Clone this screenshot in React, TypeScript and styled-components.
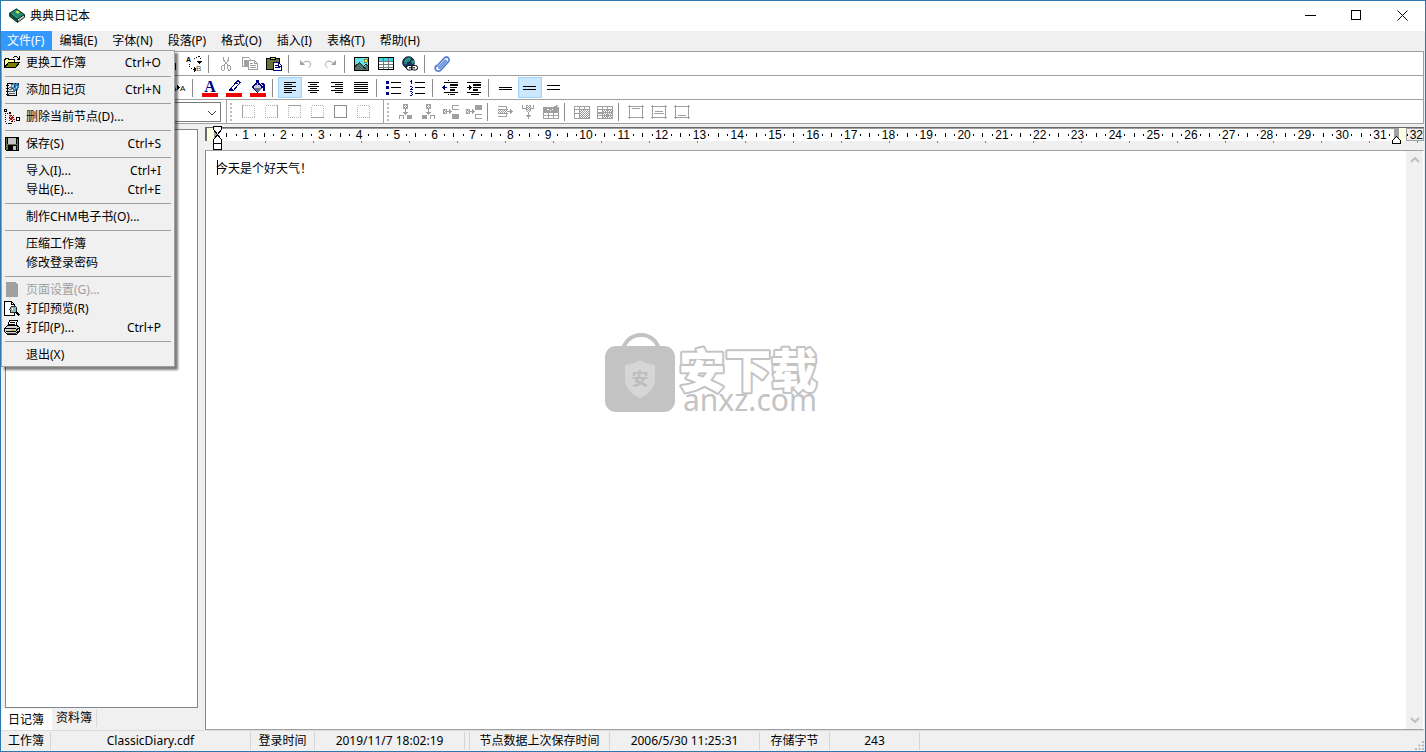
import React from "react";
import styled, { createGlobalStyle, css } from "styled-components";

const UI_FONT = `"Noto Sans", "Noto Sans CJK SC", sans-serif`;
const FACE = "#f0f0f0";
const LINE = "#a0a0a0";
const NAVY = "#000080";

const GlobalStyle = createGlobalStyle`
  *, *::before, *::after { box-sizing: border-box; }
  body { margin: 0; background: ${FACE}; }
  button, select, textarea { font: inherit; color: inherit; }
  svg { display: block; flex: none; }
`;

/* ---------- window frame ---------- */

const Window = styled.div`
  position: relative;
  display: flex;
  flex-direction: column;
  min-height: 100vh;
  border: 1px solid #2d78ae;
  background: ${FACE};
  color: #000;
  font: 12px/16px ${UI_FONT};
`;

const TitleBar = styled.header`
  display: flex;
  align-items: center;
  height: 30px;
  padding-left: 8px;
  background: #fff;
`;

const Title = styled.h1`
  flex: 1;
  margin: 0 0 0 5px;
  font-size: 12px;
  font-weight: 400;
  line-height: 16px;
`;

const CaptionButton = styled.button`
  display: flex;
  align-items: center;
  justify-content: center;
  width: 46px;
  height: 30px;
  padding: 0 0 2px;
  border: 0;
  background: transparent;
`;

const MenuBar = styled.nav`
  position: relative;
  display: flex;
  height: 20px;
`;

const MenuTitle = styled.button<{ $open?: boolean }>`
  height: 20px;
  padding: 0 8px 0 7px;
  border: 0;
  background: ${(p) => (p.$open ? "#3399ff" : "transparent")};
  color: ${(p) => (p.$open ? "#fff" : "#000")};
  white-space: nowrap;
  &:first-child { padding-left: 6px; }
`;

/* ---------- drop-down menu ---------- */

const Menu = styled.div`
  position: absolute;
  z-index: 2;
  top: 19px;
  left: 0;
  width: 174px;
  padding: 2px;
  border: 1px solid ${LINE};
  background: ${FACE};
  box-shadow: 3px 3px 2px rgba(0, 0, 0, 0.5);
`;

const MenuItem = styled.button`
  display: flex;
  align-items: center;
  width: 100%;
  height: 19px;
  padding: 0 11px 0 0;
  border: 0;
  background: transparent;
  text-align: left;
  white-space: nowrap;
  &:disabled { color: #a0a0a0; }
`;

const MenuIcon = styled.span`
  display: flex;
  flex: none;
  width: 22px;
`;

const MenuLabel = styled.span`
  flex: 1;
`;

const MenuRule = styled.hr`
  height: 1px;
  margin: 4px 1px 3px;
  border: 0;
  background: ${LINE};
`;

/* ---------- toolbars ---------- */

const CoolBar = styled.div`
  margin: 0 1px;
  border: 1px solid ${LINE};
  background: #fff;
`;

const ToolRow = styled.div`
  display: flex;
  align-items: center;
  height: 24px;
  border-bottom: 1px solid ${LINE};
  &:last-child { height: 23px; border-bottom: 0; }
`;

const ToolGroup = styled.div<{ $indent?: number }>`
  display: flex;
  align-items: center;
  padding-left: ${(p) => p.$indent ?? 0}px;
`;

const ToolButton = styled.button<{ $on?: boolean; $narrow?: boolean }>`
  display: flex;
  align-items: center;
  justify-content: center;
  width: ${(p) => (p.$narrow ? 23 : 24)}px;
  height: 21px;
  padding: 0;
  border: 1px solid transparent;
  background: transparent;
  ${(p) =>
    p.$on &&
    css`
      border-color: #99d1ff;
      background: #cce8ff;
    `}
`;

const ToolRule = styled.span`
  width: 1px;
  height: 18px;
  margin: 0 5px 0 2px;
  background: #8c8c8c;
`;

const BandEdge = styled.span`
  width: 1px;
  height: 23px;
  background: ${LINE};
`;

const Grip = styled.span`
  width: 2px;
  height: 18px;
  margin: 0 4px 0 3px;
  background: repeating-linear-gradient(#bcbcbc 0 2px, #fff 2px 4px);
`;

const SelectBox = styled.div`
  position: relative;
  display: flex;
  margin: 0 5px 0 10px;
  svg {
    position: absolute;
    top: 8px;
    right: 4px;
    pointer-events: none;
  }
`;

const StyleSelect = styled.select`
  appearance: none;
  width: 208px;
  height: 20px;
  padding: 0 20px 0 4px;
  border: 1px solid #7a7a7a;
  border-radius: 0;
  background: #fff;
`;

/* ---------- body ---------- */

const Body = styled.main`
  display: flex;
  flex: 1;
`;

const SidePane = styled.aside`
  display: flex;
  flex: none;
  flex-direction: column;
  width: 204px;
  padding-top: 5px;
`;

const Tree = styled.div`
  flex: 1;
  margin: 0 7px 0 4px;
  border: 1px solid #828790;
  background: #fff;
`;

const Tabs = styled.div`
  display: flex;
  align-items: flex-start;
  height: 22px;
  padding: 1px 0 0 1px;
`;

const Tab = styled.button<{ $active?: boolean }>`
  height: ${(p) => (p.$active ? 21 : 18)}px;
  padding: ${(p) => (p.$active ? "0 8px 0 6px" : "0 4px")};
  border: 0 solid #dadada;
  border-right-width: ${(p) => (p.$active ? 0 : 1)}px;
  background: ${(p) => (p.$active ? "#fff" : FACE)};
`;

const DocPane = styled.section`
  display: flex;
  flex: 1;
  flex-direction: column;
  min-width: 0;
  padding: 3px 1px 0 0;
`;

const Ruler = styled.div`
  position: relative;
  display: flex;
  height: 14px;
  border-top: 1px solid #696969;
  border-left: 2px solid #696969;
  background: #fff;
  font: 12px/12px "Liberation Sans", sans-serif;
`;

const RulerBlock = styled.span<{ $color: string; $width: number }>`
  flex: none;
  width: ${(p) => p.$width}px;
  background: ${(p) => p.$color};
`;

const RulerScale = styled.div`
  display: flex;
  flex: 1;
  align-items: center;
  min-width: 0;
  padding-left: 5px;
  border-top: 1px solid #a0a0a0;
`;

const RulerCell = styled.span`
  display: flex;
  flex: 1 1 0;
  justify-content: center;
  min-width: 0;
  white-space: nowrap;
`;

const RulerMark = styled.i<{ $long?: boolean }>`
  width: 1px;
  height: ${(p) => (p.$long ? 4 : 2)}px;
  background: #000;
`;

const RulerEnd = styled.span`
  display: flex;
  align-items: center;
  justify-content: flex-end;
  gap: 2px;
  width: 18px;
  border: 1px solid ${LINE};
  background: ${FACE};
`;

const TabStops = styled.div`
  height: 9px;
  margin-left: 1px;
  background: repeating-linear-gradient(90deg, #808080 0 1px, transparent 1px 48px) 11px 0 / 48px 2px repeat-x;
`;

const IndentMarkers = styled.svg`
  position: absolute;
  top: -3px;
  left: 5px;
`;

const RightMarker = styled.svg`
  position: absolute;
  top: 8px;
  right: 22px;
`;

const Editor = styled.div`
  position: relative;
  display: flex;
  flex: 1;
  border: 1px solid ${LINE};
  border-color: ${LINE} #fff ${LINE} #828790;
  background: #fff;
`;

const Page = styled.textarea`
  flex: 1;
  min-width: 0;
  padding: 9px 10px;
  border: 0;
  outline: 0;
  resize: none;
  background: #fff;
  font: 12px/16px "Noto Sans CJK SC", sans-serif;
`;

const Caret = styled.span`
  position: absolute;
  top: 9px;
  left: 11px;
  width: 1px;
  height: 15px;
  background: #000;
`;

const ScrollBar = styled.div`
  display: flex;
  flex: none;
  flex-direction: column;
  justify-content: space-between;
  width: 17px;
  background: ${FACE};
`;

const ScrollButton = styled.button`
  display: flex;
  align-items: center;
  justify-content: center;
  width: 17px;
  height: 18px;
  padding: 0;
  border: 0;
  background: transparent;
`;

const Watermark = styled.svg`
  position: absolute;
  z-index: 1;
  top: 50%;
  left: 50%;
  transform: translate(-50%, -50%);
  pointer-events: none;
`;

/* ---------- status bar ---------- */

const StatusBar = styled.footer`
  display: flex;
  align-items: center;
  height: 21px;
  padding-left: 1px;
  border-top: 1px solid #dcdcdc;
`;

const StatusCell = styled.span<{ $width: number }>`
  width: ${(p) => p.$width}px;
  height: 18px;
  border-right: 1px solid #d4d4d4;
  line-height: 18px;
  text-align: center;
  white-space: nowrap;
`;

const SizeGrip = styled.svg`
  align-self: flex-end;
  margin: 0 1px 1px auto;
`;

/* ---------- icons ---------- */

type IconProps = { children: React.ReactNode; w?: number; h?: number; smooth?: boolean };

const Icon = ({ children, w = 16, h = 16, smooth }: IconProps) => (
  <svg
    width={w}
    height={h}
    viewBox={`0 0 ${w} ${h}`}
    fill="none"
    shapeRendering={smooth ? "auto" : "crispEdges"}
    aria-hidden="true"
  >
    {children}
  </svg>
);

const BookIcon = () => (
  <Icon smooth>
    <path d="M.7 5.200 7.400.8l8.100 5.800-7 4.600z" fill="#1c8a6c" stroke="#0c2a24" />
    <path d="M.7 5.200v3.200l7.800 6v-3.300z" fill="#0d5a4c" stroke="#0c2a24" />
    <path d="M8.500 11.200l7-4.600v2.800l-7 5z" fill="#e9efe2" stroke="#0c2a24" />
    <path d="M9 12.900l6-4.200" stroke="#777" strokeWidth=".6" />
    <path d="M6.300 3.900l2-1.300 2.600 1.800-2 1.400z" fill="#e3e23c" />
    <path d="M2.600 5.800l5.800 4.300" stroke="#53c2a0" strokeWidth=".8" />
  </Icon>
);

const OpenIcon = () => (
  <Icon>
    <path d="M10 1h3v1h-3zM9 2h1v1h-1zM13 2h1v1h-1zM14 3h2v1h-2zM15 1h1v3h-1zM13 4h3v1h-3z" fill="#000" />
    <path d="M.5 12.500v-8h1v-1h3v1h6v3" fill="#ffff99" stroke="#000" />
    <path d="M.5 12.500l4-5h11l-4 5z" fill="#808000" stroke="#000" />
  </Icon>
);

const AddPageIcon = () => (
  <Icon>
    <path d="M3.500 1.500h9v12h-9z" fill="#e4e8ea" stroke="#000" />
    <path d="M2 3h3v1h-3zM2 6h3v1h-3zM2 9h3v1h-3zM2 12h3v1h-3z" fill="#000" />
    <path d="M5 5h2v1h-2zM5 7h3v1h-3zM5 9h6v1h-6zM5 11h6v1h-6z" fill="#5a6468" />
    <path d="M7 2h2v-1h2v1h1v-1h2v2h1v3h-1v2h-2v1h-3v-2h-2z" fill="#2c7dbb" />
    <path d="M8 3h2v2h-2zM12 4h1v2h-1zM10 6h1v1h-1z" fill="#a9daf5" />
    <path d="M14 1h1v2h-1zM10 3h1v2h-1zM13 7h1v1h-1zM8 6h1v1h-1z" fill="#10243c" />
  </Icon>
);

const DeleteNodeIcon = () => (
  <Icon>
    <path d="M0 0h3v3h-3zM12 8h4v4h-4z" fill="#000" />
    <path d="M1 1h1v1h-1zM13 9h2v2h-2z" fill="#fff" />
    <path
      d="M1 4h1v1h-1zM1 6h1v1h-1zM1 8h1v1h-1zM1 10h1v1h-1zM1 12h1v1h-1zM2 14h1v1h-1zM4 14h1v1h-1zM3 4h1v1h-1zM5 3h2v2h-2zM5 14h3v1h-3z"
      fill="#000"
    />
    <path
      d="M5 6h2v1h-2zM9 6h1v1h-1zM6 7h1v1h-1zM8 7h1v1h-1zM5 9h4v1h-4zM7 8h2v1h-2zM6 10h1v1h-1zM9 10h2v1h-2zM5 11h1v1h-1zM8 11h1v1h-1zM10 12h1v1h-1z"
      fill="#b01818"
    />
    <path d="M7 6h1v1h-1zM9 8h1v1h-1zM7 10h1v1h-1zM5 8h1v1h-1zM7 12h2v1h-2z" fill="#1c0808" />
  </Icon>
);

const SaveIcon = () => (
  <Icon>
    <path d="M1.500 1.500h13v13h-12l-1-1z" fill="#6c6c44" stroke="#000" />
    <path d="M4 2h8v6h-8z" fill="#c4c4c4" />
    <path d="M4 9h9v5h-9zM3 2h1v6h-1zM12 2h1v6h-1zM13 2h1v1h-1z" fill="#000" />
    <path d="M9 10h3v4h-3z" fill="#c0c0c0" />
  </Icon>
);

const PageSetupIcon = () => (
  <Icon>
    <path d="M2 0h9l3 3v12h-12z" fill="#a0a0a0" />
  </Icon>
);

const PreviewIcon = () => (
  <Icon>
    <path d="M.5.5h7l3 3v11h-10z" fill="#fff" stroke="#000" />
    <path d="M7.500.5v3h3" stroke="#000" />
    <circle cx="9.500" cy="8.500" r="3.500" fill="#8fb8b4" stroke="#1c2c2c" />
    <path d="M12 11l3.500 3.500" stroke="#000" strokeWidth="2" />
    <path d="M8 7h1v2h-1z" fill="#fff" />
  </Icon>
);

const PrintIcon = () => (
  <Icon>
    <path d="M5.500.5h8l-2 6h-8z" fill="#fff" stroke="#000" />
    <path d="M6 2h5v1h-5zM5 4h6v1h-6z" fill="#000" />
    <path d="M.5 8.500l3-3h9.500l2.500 2v4l-3 3h-9l-3-3z" fill="#d4d4cc" stroke="#000" />
    <path d="M1 8h11v1h-11zM2 11h10v1h-10zM12 9h1v-1h2v1h-1v1h-1v1h-1zM12 12h1v-1h2v1h-1v1h-2z" fill="#000" />
    <path d="M3 13h9v1h-9z" fill="#404038" />
    <path d="M7 10h4v1h-4z" fill="#b8b000" />
  </Icon>
);

const ReplaceIcon = () => (
  <Icon>
    <text x="0" y="6" fontFamily="Liberation Sans" fontWeight="700" fontSize="7" fill="#000">A</text>
    <text x="10" y="15" fontFamily="Liberation Sans" fontSize="8" fill="#555">B</text>
    <path
      d="M3 8h1v1h-1zM3 10h1v1h-1zM5 12h1v1h-1zM7 13h1v1h-1zM8 11h1v5h-1zM9 12h1v3h-1zM8 2h1v1h-1zM10 1h1v1h-1zM12 0h2v1h-2zM14 2h1v1h-1zM11 5h5v1h-5zM12 6h3v1h-3zM13 7h1v1h-1z"
      fill="#000"
    />
  </Icon>
);

const FindIcon = () => (
  <Icon>
    <path d="M2 3h4v4h3v-4h4v4h1v7h-5v-4h-3v4h-5v-7h1z" fill="#000" />
  </Icon>
);

const CutIcon = () => (
  <Icon>
    <path d="M5.500 1v3l5 6M10.500 1v3l-5 6" stroke="#a0a0a0" />
    <path d="M4 9h2v1h-2zM3 10h1v4h-1zM6 10h1v3h-1zM4 14h2v-1h1v1h-1v1h-2zM10 9h2v1h-2zM9 10h1v3h-1zM12 10h1v4h-1zM10 13h1v1h1v1h-2z" fill="#a0a0a0" />
  </Icon>
);

const CopyIcon = () => (
  <Icon>
    <path d="M.5 1.500h6l2 2v7h-8zM2 4h3v1h-3zM2 6h4v1h-4zM2 8h4v1h-4z" stroke="#a0a0a0" strokeWidth="1" />
    <path d="M6.500 4.500h6l3 3v6h-9z" fill="#fff" stroke="#a0a0a0" />
    <path d="M12.500 4.500v3h3M8 7.500h3M8 9.500h6M8 11.500h6" stroke="#a0a0a0" />
  </Icon>
);

const PasteIcon = () => (
  <Icon>
    <path d="M.5 2.500h13v11h-13z" fill="#6e6e3c" stroke="#000" />
    <path d="M4 1h6v3h-6z" fill="#000" />
    <path d="M5 2h4v1h-4z" fill="#d8d860" />
    <path d="M7.500 6.500h5l3 3v5h-8z" fill="#fff" stroke={NAVY} />
    <path d="M9 9.500h3M9 11.500h5M12.500 7v3h3" stroke={NAVY} />
  </Icon>
);

const UndoIcon = () => (
  <Icon smooth>
    <path d="M4 8.500c1.500-3 6-4.500 8-2 1.500 2 .5 4-1.500 5" stroke="#a0a0a0" />
    <path d="M2 4v5h5z" fill="#a0a0a0" />
  </Icon>
);

const RedoIcon = () => (
  <Icon smooth>
    <path d="M12 8.500c-1.500-3-6-4.500-8-2-1.500 2-.5 4 1.500 5" stroke="#a0a0a0" />
    <path d="M14 4v5h-5z" fill="#a0a0a0" />
  </Icon>
);

const ImageIcon = () => (
  <Icon>
    <path d="M.5 1.500h14v13h-14z" fill="#63e3e8" stroke="#000" />
    <path d="M1 14v-3l4-4h1l4 4 2-2 2 2v3z" fill="#56706c" />
    <path d="M1 10.500l4.500-4 6 6.500M9 11l3-3 2.500 2" stroke="#102828" />
    <path d="M10 3h3v3h-3z" fill="#f6f03c" stroke="#333" strokeWidth=".5" />
  </Icon>
);

const TableIcon = () => (
  <Icon>
    <path d="M.5 1.500h15v12h-15z" fill="#fff" stroke="#000" />
    <path d="M1 2h14v3h-14z" fill="#35d6e0" />
    <path d="M1 5h14v1h-14zM1 8h14v1h-14zM1 11h14v1h-14zM5 2h1v11h-1zM10 2h1v11h-1z" fill="#6c7c7c" />
  </Icon>
);

const GlobeIcon = () => (
  <Icon smooth>
    <circle cx="6.500" cy="6.500" r="5.800" fill="#14306e" stroke="#0a1c38" />
    <path d="M3 3.500c2-2.200 5-2.500 6-1.500l-1 3-3 1-1 3-2-2z" fill="#2a9b6c" />
    <path d="M9 5l3-1 .3 3-2.300 1z" fill="#2a9b6c" />
    <rect x="4.500" y="9.500" width="6" height="4.500" rx="2" fill="#fff" stroke="#000" />
    <rect x="9.500" y="9.500" width="6" height="4.500" rx="2" fill="#fff" stroke="#000" />
    <path d="M7 11.800h6" stroke="#000" />
  </Icon>
);

const ClipIcon = () => (
  <Icon smooth>
    <path
      d="M2.500 10.500l7.500-8.200c1.200-1.300 3-1.500 4.200-.5s1.200 2.800 0 4.100l-7.200 7.900c-1.300 1.500-3.500 1.700-4.800.6s-1.400-3.300-.1-4.800"
      stroke="#5b84d4"
      strokeWidth="1.800"
      strokeLinecap="round"
    />
    <path d="M11.500 5l-6 6.500" stroke="#5b84d4" strokeWidth="3" strokeLinecap="round" />
    <path d="M11.500 5l-6 6.500" stroke="#a9c4f4" strokeLinecap="round" />
  </Icon>
);

const CaseIcon = () => (
  <Icon>
    <text x="1" y="11" fontFamily="Liberation Sans" fontWeight="700" fontSize="8" fill="#000">A</text>
    <path d="M7 5h1v5h-1zM8 6h1v3h-1zM9 7h1v1h-1z" fill="#000" />
    <text x="10" y="11" fontFamily="Liberation Sans" fontSize="8" fill="#000">A</text>
  </Icon>
);

const FontColorIcon = () => (
  <svg width="16" height="20" viewBox="0 0 16 20" aria-hidden="true">
    <text x="8" y="14" textAnchor="middle" fontFamily="Liberation Serif" fontWeight="700" fontSize="16" fill={NAVY}>
      A
    </text>
    <path d="M0 15h16v4h-16z" fill="#f00000" />
  </svg>
);

const HighlightIcon = () => (
  <svg width="16" height="20" viewBox="0 0 16 20" fill="none" shapeRendering="crispEdges" aria-hidden="true">
    <path d="M5 10l7-7.500 2 2-6.500 8z" fill="#fff" stroke={NAVY} />
    <path d="M10.500 5l2.500 2" stroke={NAVY} />
    <path d="M3 13v-1l2-2.500 2.500 2.500-2 1z" fill={NAVY} />
    <path d="M0 15h16v4h-16z" fill="#f00000" />
  </svg>
);

const FillIcon = () => (
  <svg width="16" height="20" viewBox="0 0 16 20" fill="none" shapeRendering="crispEdges" aria-hidden="true">
    <path d="M2.500 9l5-5 5 5-5 5z" fill="#c8c8e0" stroke={NAVY} />
    <path d="M3 10h9l-4 4z" fill="#6c6c8c" />
    <path d="M6.500 7v-5h2v5" stroke={NAVY} />
    <path d="M11 5h3l1 2v6h-2v-5z" fill={NAVY} />
    <path d="M0 15h16v4h-16z" fill="#f00000" />
  </svg>
);

const Lines = ({ rows }: { rows: [number, number][] }) => (
  <path d={rows.map(([x, w], i) => `M${x} ${2 + i * 2}h${w}v1h-${w}z`).join("")} fill="#000" />
);

const AlignLeftIcon = () => (
  <Icon><Lines rows={[[2, 12], [2, 8], [2, 12], [2, 8], [2, 12], [2, 8]]} /></Icon>
);
const AlignCenterIcon = () => (
  <Icon><Lines rows={[[2, 11], [4, 7], [2, 11], [4, 7], [2, 11], [4, 7]]} /></Icon>
);
const AlignRightIcon = () => (
  <Icon><Lines rows={[[1, 12], [5, 8], [1, 12], [5, 8], [1, 12], [5, 8]]} /></Icon>
);
const AlignJustifyIcon = () => (
  <Icon><Lines rows={[[0, 14], [0, 14], [0, 14], [0, 14], [0, 14], [0, 14]]} /></Icon>
);

const BulletIcon = () => (
  <Icon>
    <path d="M0 1h3v3h-3zM0 6h3v3h-3zM0 12h3v3h-3z" fill={NAVY} />
    <path d="M5 2h10v1h-10zM5 7h10v1h-10zM5 13h10v1h-10z" fill="#000" />
  </Icon>
);

const NumberIcon = () => (
  <Icon>
    <path d="M1 0h1v4h-1zM0 1h1v1h-1z" fill={NAVY} />
    <path d="M0 6h2v1h-2zM2 7h1v1h-1zM1 8h1v1h-1zM0 9h3v1h-3z" fill={NAVY} />
    <path d="M0 11h2v1h-2zM2 12h1v1h-1zM1 13h1v1h-1zM2 14h1v1h-1zM0 15h2v1h-2z" fill={NAVY} />
    <path d="M5 2h10v1h-10zM5 7h10v1h-10zM5 13h10v1h-10z" fill="#000" />
  </Icon>
);

const OutdentIcon = () => (
  <Icon>
    <path d="M2 2h14v1h-14zM8 4h8v2h-8zM8 7h7v1h-7zM8 9h5v2h-5zM2 12h14v1h-14zM6 0h1v1h-1zM6 14h1v1h-1zM8 14h5v1h-5z" fill="#000" />
    <path d="M0 7h5v1h-5zM1 6h1v3h-1zM2 5h1v5h-1z" fill={NAVY} />
  </Icon>
);

const IndentIcon = () => (
  <Icon>
    <path d="M1 2h14v1h-14zM7 4h8v2h-8zM7 7h8v1h-8zM7 9h5v2h-5zM1 12h14v1h-14zM5 14h8v1h-8z" fill="#000" />
    <path d="M1 7h5v1h-5zM4 6h1v3h-1zM3 5h1v5h-1z" fill="#000" />
  </Icon>
);

const SpacingIcon = ({ gap }: { gap: number }) => (
  <Icon>
    <path d={`M1 ${9 - gap}h13v1h-13zM1 9h13v1h-13z`} fill="#000" />
  </Icon>
);

const BorderIcon = ({ solid }: { solid?: "none" | "top" | "bottom" | "all" | "left" | "right" }) => (
  <Icon>
    <path d="M2.500 1.500h12v12h-12z" stroke="#b4b4b4" strokeDasharray={solid === "all" ? undefined : "1 1"} />
    {solid === "top" && <path d="M2 1.500h13" stroke="#a0a0a0" />}
    {solid === "bottom" && <path d="M2 13.500h13" stroke="#a0a0a0" />}
    {solid === "left" && <path d="M2.500 1v13" stroke="#a0a0a0" />}
    {solid === "right" && <path d="M14.500 1v13" stroke="#a0a0a0" />}
    {solid === "all" && <path d="M2.500 1.500h12v12h-12z" stroke="#8c8c8c" />}
  </Icon>
);

const Hatch = ({ x, y, w, h }: { x: number; y: number; w: number; h: number }) => {
  const dots: string[] = [];
  for (let r = 0; r < h; r++)
    for (let c = r % 2; c < w; c += 2) dots.push(`M${x + c} ${y + r}h1v1h-1z`);
  return <path d={dots.join("")} fill="#9a9a9a" />;
};

const G = "#a0a0a0";

const InsertColumnIcon = ({ right }: { right?: boolean }) => (
  <Icon>
    <path d="M6.500.5h4v4h-4z" stroke={G} />
    <Hatch x={7} y={1} w={3} h={3} />
    <path d="M8 5h1v2h-1zM6 8h5v1h-5zM7 9h3v1h-3zM8 6h1v5h-1z" fill={G} />
    <path d={right ? "M2 11h5v4h-5z" : "M10 11h5v4h-5z"} fill={G} />
    <path d={right ? "M10.500 15v-3.500h4v3.500" : "M2.500 15v-3.500h4v3.500"} stroke={G} />
  </Icon>
);

const InsertRowIcon = ({ below }: { below?: boolean }) => (
  <Icon>
    <path d="M.5 5.500h3v4h-3z" stroke={G} />
    <Hatch x={1} y={6} w={3} h={3} />
    <path d="M4 7h5v1h-5zM6 5h1v5h-1zM7 6h1v3h-1z" fill={G} />
    <path d={below ? "M9 1h7v5h-7z" : "M9 10h7v5h-7z"} fill={G} />
    <path d={below ? "M16 10.500h-6.500v4h6.500" : "M16 1.500h-6.500v4h6.500"} stroke={G} />
  </Icon>
);

const DeleteRowIcon = () => (
  <Icon>
    <path d="M1 2.500h8v3M1 12.500h8v-3M1 5.500h10M1 9.500h10" stroke={G} />
    <Hatch x={1} y={6} w={10} h={3} />
    <path d="M11 7h5v1h-5zM13 5h1v5h-1zM14 6h1v3h-1z" fill={G} />
  </Icon>
);

const DeleteColumnIcon = () => (
  <Icon>
    <path d="M2.500 1v3.500h3M13.500 1v3.500h-3M6.500 1v6M10.500 1v6" stroke={G} />
    <Hatch x={7} y={1} w={3} h={7} />
    <path d="M8 8h1v6h-1zM6 11h5v1h-5zM7 12h3v1h-3zM8 13h1v2h-1z" fill={G} />
  </Icon>
);

const DeleteTableIcon = () => (
  <Icon>
    <path d="M.5 3.500h15v11h-15zM1 8.500h14M1 11.500h14M5.500 5v9M10.500 5v9" stroke={G} />
    <path d="M1 4h14v4h-14zM9 3h2v-1h2v-1h2v1h-1v1h-1v1h-4z" fill={G} />
    <path d="M4 5h2v1h-2zM9 5h1v1h-1zM7 6h1v1h-1z" fill="#fff" />
  </Icon>
);

const GridIcon = ({ dense }: { dense?: boolean }) => (
  <Icon>
    <path d="M.5 2.500h15v12h-15zM1 5.500h14M1 9.500h4M5.500 3v11M10.500 3v2" stroke={G} />
    <Hatch x={5} y={6} w={10} h={8} />
    {dense && <path d="M1 8.500h14M1 11.500h14M10.500 5v9" stroke={G} />}
  </Icon>
);

const VAlignIcon = ({ at }: { at: number }) => (
  <Icon>
    <path d="M0 2h16v1h-16zM0 13h16v1h-16zM1 1h1v14h-1zM14 1h1v14h-1z" fill={G} />
    <path d={`M4 ${at}h8v1h-8z${at === 7 ? "M3 9h10v1h-10z" : ""}`} fill={G} />
  </Icon>
);

const Chevron = ({ up, color, thin }: { up?: boolean; color: string; thin?: boolean }) => (
  <svg width="10" height="6" viewBox="0 0 10 6" fill="none" aria-hidden="true">
    <path d={up ? "M1 5l4-4 4 4" : "M1 1l4 4 4-4"} stroke={color} strokeWidth={thin ? 1 : 2} />
  </svg>
);

/* ---------- data ---------- */

const MENUS = ["文件(F)", "编辑(E)", "字体(N)", "段落(P)", "格式(O)", "插入(I)", "表格(T)", "帮助(H)"];

type Entry = { label: string; keys?: string; icon?: React.ReactNode; disabled?: boolean };

const FILE_MENU: Entry[][] = [
  [{ label: "更换工作簿", keys: "Ctrl+O", icon: <OpenIcon /> }],
  [{ label: "添加日记页", keys: "Ctrl+N", icon: <AddPageIcon /> }],
  [{ label: "删除当前节点(D)...", icon: <DeleteNodeIcon /> }],
  [{ label: "保存(S)", keys: "Ctrl+S", icon: <SaveIcon /> }],
  [
    { label: "导入(I)...", keys: "Ctrl+I" },
    { label: "导出(E)...", keys: "Ctrl+E" },
  ],
  [{ label: "制作CHM电子书(O)..." }],
  [{ label: "压缩工作簿" }, { label: "修改登录密码" }],
  [
    { label: "页面设置(G)...", icon: <PageSetupIcon />, disabled: true },
    { label: "打印预览(R)", icon: <PreviewIcon /> },
    { label: "打印(P)...", keys: "Ctrl+P", icon: <PrintIcon /> },
  ],
  [{ label: "退出(X)" }],
];

type Tool = { name: string; icon: React.ReactNode; on?: boolean };

const STANDARD: Tool[][] = [
  [
    { name: "更换工作簿", icon: <OpenIcon /> },
    { name: "添加日记页", icon: <AddPageIcon /> },
    { name: "删除当前节点", icon: <DeleteNodeIcon /> },
    { name: "保存", icon: <SaveIcon /> },
    { name: "打印预览", icon: <PreviewIcon /> },
    { name: "打印", icon: <PrintIcon /> },
    { name: "查找", icon: <FindIcon /> },
    { name: "替换", icon: <ReplaceIcon /> },
  ],
  [
    { name: "剪切", icon: <CutIcon /> },
    { name: "复制", icon: <CopyIcon /> },
    { name: "粘贴", icon: <PasteIcon /> },
  ],
  [
    { name: "撤销", icon: <UndoIcon /> },
    { name: "重做", icon: <RedoIcon /> },
  ],
  [
    { name: "图片", icon: <ImageIcon /> },
    { name: "表格", icon: <TableIcon /> },
    { name: "超链接", icon: <GlobeIcon /> },
  ],
  [{ name: "附件", icon: <ClipIcon /> }],
];

const FORMAT: Tool[][] = [
  [{ name: "更改大小写", icon: <CaseIcon /> }],
  [
    { name: "字体颜色", icon: <FontColorIcon /> },
    { name: "突出显示", icon: <HighlightIcon /> },
    { name: "填充颜色", icon: <FillIcon /> },
  ],
  [
    { name: "左对齐", icon: <AlignLeftIcon />, on: true },
    { name: "居中", icon: <AlignCenterIcon /> },
    { name: "右对齐", icon: <AlignRightIcon /> },
    { name: "两端对齐", icon: <AlignJustifyIcon /> },
  ],
  [
    { name: "项目符号", icon: <BulletIcon /> },
    { name: "编号", icon: <NumberIcon /> },
  ],
  [
    { name: "减少缩进", icon: <OutdentIcon /> },
    { name: "增加缩进", icon: <IndentIcon /> },
  ],
  [
    { name: "单倍行距", icon: <SpacingIcon gap={2} /> },
    { name: "1.5 倍行距", icon: <SpacingIcon gap={3} />, on: true },
    { name: "双倍行距", icon: <SpacingIcon gap={4} /> },
  ],
];

const BORDERS: Tool[][] = [
  [
    { name: "左边框", icon: <BorderIcon solid="left" /> },
    { name: "右边框", icon: <BorderIcon solid="right" /> },
    { name: "上边框", icon: <BorderIcon solid="top" /> },
    { name: "下边框", icon: <BorderIcon solid="bottom" /> },
    { name: "全部边框", icon: <BorderIcon solid="all" /> },
    { name: "无边框", icon: <BorderIcon solid="none" /> },
  ],
];

const TABLE_TOOLS: Tool[][] = [
  [
    { name: "左侧插入列", icon: <InsertColumnIcon /> },
    { name: "右侧插入列", icon: <InsertColumnIcon right /> },
    { name: "上方插入行", icon: <InsertRowIcon /> },
    { name: "下方插入行", icon: <InsertRowIcon below /> },
  ],
  [
    { name: "删除行", icon: <DeleteRowIcon /> },
    { name: "删除列", icon: <DeleteColumnIcon /> },
    { name: "删除表格", icon: <DeleteTableIcon /> },
  ],
  [
    { name: "合并单元格", icon: <GridIcon /> },
    { name: "拆分单元格", icon: <GridIcon dense /> },
  ],
  [
    { name: "顶端对齐", icon: <VAlignIcon at={4} /> },
    { name: "垂直居中", icon: <VAlignIcon at={7} /> },
    { name: "底端对齐", icon: <VAlignIcon at={11} /> },
  ],
];

const STATUS: [number, string][] = [
  [49, "工作簿"],
  [200, "ClassicDiary.cdf"],
  [64, "登录时间"],
  [150, "2019/11/7 18:02:19"],
  [5, ""],
  [140, "节点数据上次保存时间"],
  [150, "2006/5/30 11:25:31"],
  [70, "存储字节"],
  [90, "243"],
];

/* ---------- composition ---------- */

const Tools = ({ groups, indent, narrow }: { groups: Tool[][]; indent?: number; narrow?: boolean }) => (
  <ToolGroup $indent={indent} role="toolbar">
    {groups.map((group, i) => (
      <React.Fragment key={i}>
        {i > 0 && <ToolRule />}
        {group.map((t) => (
          <ToolButton key={t.name} type="button" aria-label={t.name} $on={t.on} $narrow={narrow}>
            {t.icon}
          </ToolButton>
        ))}
      </React.Fragment>
    ))}
  </ToolGroup>
);

const RulerStrip = () => (
  <Ruler>
    <RulerBlock $color="#ffffe1" $width={7} />
    <RulerBlock $color="#a0a0a0" $width={3} />
    <RulerScale>
      {Array.from({ length: 31 }, (_, i) => (
        <React.Fragment key={i}>
          <RulerCell><RulerMark $long /></RulerCell>
          <RulerCell><RulerMark /></RulerCell>
          <RulerCell>{i + 1}</RulerCell>
          <RulerCell><RulerMark /></RulerCell>
        </React.Fragment>
      ))}
    </RulerScale>
    <RulerBlock $color="#a0a0a0" $width={5} />
    <RulerBlock $color="#ffffe1" $width={7} />
    <RulerEnd>
      <RulerMark />
      32
    </RulerEnd>
    <IndentMarkers width="11" height="26" viewBox="0 0 11 26" shapeRendering="crispEdges" aria-hidden="true">
      <path d="M1.500 1.500h8v3l-4 5-4-5z" fill="#fff" stroke="#000" />
      <path d="M5.500 10l4 4.500v3.500h-8v-3.500z" fill="#fff" stroke="#000" />
      <path d="M1.500 18.500h8v6h-8z" fill="#fff" stroke="#000" />
    </IndentMarkers>
    <RightMarker width="11" height="9" viewBox="0 0 11 9" shapeRendering="crispEdges" aria-hidden="true">
      <path d="M5.500.5l4 4v3h-8v-3z" fill="#fff" stroke="#000" />
    </RightMarker>
  </Ruler>
);

export default function App() {
  return (
    <Window>
      <GlobalStyle />
      <TitleBar>
        <BookIcon />
        <Title>典典日记本</Title>
        <CaptionButton type="button" aria-label="最小化">
          <Icon w={11} h={11}><path d="M0 5h11v1h-11z" fill="#000" /></Icon>
        </CaptionButton>
        <CaptionButton type="button" aria-label="最大化">
          <Icon w={11} h={11}><path d="M.5.5h9v9h-9z" stroke="#000" /></Icon>
        </CaptionButton>
        <CaptionButton type="button" aria-label="关闭">
          <Icon w={11} h={11} smooth><path d="M.5.5l10 10M10.500.5l-10 10" stroke="#000" /></Icon>
        </CaptionButton>
      </TitleBar>

      <MenuBar>
        {MENUS.map((m, i) => (
          <MenuTitle key={m} type="button" $open={i === 0}>{m}</MenuTitle>
        ))}
        <Menu role="menu">
          {FILE_MENU.map((section, i) => (
            <React.Fragment key={i}>
              {i > 0 && <MenuRule />}
              {section.map((e) => (
                <MenuItem key={e.label} type="button" role="menuitem" disabled={e.disabled}>
                  <MenuIcon>{e.icon}</MenuIcon>
                  <MenuLabel>{e.label}</MenuLabel>
                  {e.keys && <span>{e.keys}</span>}
                </MenuItem>
              ))}
            </React.Fragment>
          ))}
        </Menu>
      </MenuBar>

      <CoolBar>
        <ToolRow><Tools groups={STANDARD} indent={11} /></ToolRow>
        <ToolRow><Tools groups={FORMAT} indent={163} /></ToolRow>
        <ToolRow>
          <SelectBox>
            <StyleSelect aria-label="段落样式" />
            <Chevron color="#444" thin />
          </SelectBox>
          <BandEdge />
          <Grip />
          <Tools groups={BORDERS} narrow />
          <ToolGroup $indent={9}>
            <BandEdge />
            <Grip />
          </ToolGroup>
          <Tools groups={TABLE_TOOLS} narrow />
        </ToolRow>
      </CoolBar>

      <Body>
        <SidePane>
          <Tree role="tree" aria-label="日记簿" />
          <Tabs role="tablist">
            <Tab type="button" role="tab" aria-selected $active>日记簿</Tab>
            <Tab type="button" role="tab">资料簿</Tab>
          </Tabs>
        </SidePane>
        <DocPane>
          <RulerStrip />
          <TabStops />
          <Editor>
            <Page aria-label="日记内容" defaultValue="今天是个好天气！" spellCheck={false} />
            <Caret />
            <ScrollBar>
              <ScrollButton type="button" aria-label="向上滚动"><Chevron up color="#bfbfbf" /></ScrollButton>
              <ScrollButton type="button" aria-label="向下滚动"><Chevron color="#bfbfbf" /></ScrollButton>
            </ScrollBar>
          </Editor>
        </DocPane>
      </Body>

      <StatusBar>
        {STATUS.map(([w, text], i) => (
          <StatusCell key={i} $width={w}>{text}</StatusCell>
        ))}
        <SizeGrip width="9" height="9" viewBox="0 0 9 9" aria-hidden="true">
          <path d="M7 0h2v2h-2zM3.500 3.500h2v2h-2zM7 3.500h2v2h-2zM0 7h2v2h-2zM3.500 7h2v2h-2zM7 7h2v2h-2z" fill="#b8b8b8" />
        </SizeGrip>
      </StatusBar>

      <Watermark width="236" height="96" viewBox="-10 -5 236 96" aria-label="安下载 anxz.com">
        <path d="M18 19a18 17 0 0 1 36 0" fill="none" stroke="#c3c3c3" strokeWidth="4" />
        <rect x="0" y="13" width="70" height="66" rx="11" fill="#c3c3c3" />
        <path d="M20 32q9-1 15-5 6 4 15 5v16q-1 11-15 17-14-6-15-17z" fill="#d6d6d6" />
        <text x="35" y="52" textAnchor="middle" fontFamily="Noto Sans CJK SC" fontWeight="700" fontSize="17" fill="#bdbdbd">安</text>
        <text
          x="74"
          y="54"
          fontFamily="Noto Sans CJK SC"
          fontWeight="900"
          fontSize="46"
          fill="#fff"
          stroke="#c3c3c3"
          strokeWidth="4"
          strokeLinejoin="round"
          paintOrder="stroke"
        >
          安下载
        </text>
        <text x="78" y="78" fontFamily="Noto Sans" fontWeight="400" fontSize="30" fill="#c3c3c3">anxz.com</text>
      </Watermark>
    </Window>
  );
}
